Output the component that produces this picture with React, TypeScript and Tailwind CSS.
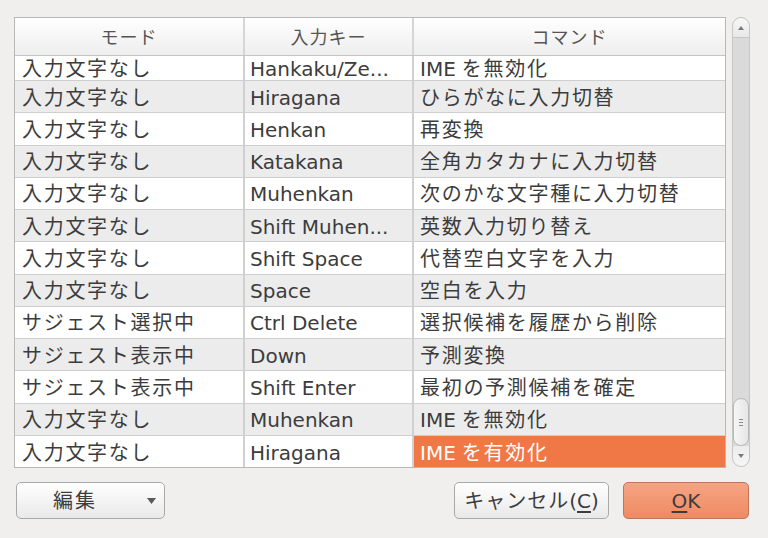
import React from "react";

const rows = [
  { mode: "入力文字なし", key: "Hankaku/Ze...", cmd: "IME を無効化" },
  { mode: "入力文字なし", key: "Hiragana", cmd: "ひらがなに入力切替" },
  { mode: "入力文字なし", key: "Henkan", cmd: "再変換" },
  { mode: "入力文字なし", key: "Katakana", cmd: "全角カタカナに入力切替" },
  { mode: "入力文字なし", key: "Muhenkan", cmd: "次のかな文字種に入力切替" },
  { mode: "入力文字なし", key: "Shift Muhen...", cmd: "英数入力切り替え" },
  { mode: "入力文字なし", key: "Shift Space", cmd: "代替空白文字を入力" },
  { mode: "入力文字なし", key: "Space", cmd: "空白を入力" },
  { mode: "サジェスト選択中", key: "Ctrl Delete", cmd: "選択候補を履歴から削除" },
  { mode: "サジェスト表示中", key: "Down", cmd: "予測変換" },
  { mode: "サジェスト表示中", key: "Shift Enter", cmd: "最初の予測候補を確定" },
  { mode: "入力文字なし", key: "Muhenkan", cmd: "IME を無効化" },
  { mode: "入力文字なし", key: "Hiragana", cmd: "IME を有効化" },
];

const font = { fontFamily: '"DejaVu Sans", "Noto Sans CJK JP", sans-serif' };

// splits leading latin ("IME ") from the japanese part so only the kana gets spacing
const Cmd = ({ text }: { text: string }) => {
  const m = text.match(/^([A-Za-z]+ )(.*)$/);
  if (!m) return <span className="tracking-[1.7px]">{text}</span>;
  return (
    <>
      <span>{m[1].trim()}</span>
      <span className="tracking-[1.7px] ml-[6px]">{m[2]}</span>
    </>
  );
};

const App = () => {
  return (
    <div
      className="w-[768px] h-[538px] bg-[#f0efee] text-[#3c3c3c] overflow-hidden"
      style={font}
    >
      <div className="flex pt-[17px] pl-[14px] gap-[6px]">
        {/* table */}
        <div className="w-[712px] h-[451px] border border-[#b8b8b8] bg-white flex flex-col overflow-hidden">
          <div className="grid grid-cols-[230px_169px_1fr] h-[38px] shrink-0 border-b border-[#c4c4c4] bg-gradient-to-b from-white to-[#eeeeee] text-[18px] text-[#555555] tracking-[1px]">
            <div className="flex items-center justify-center pt-[2px] border-r-2 border-[#d6d6d6]">モード</div>
            <div className="flex items-center justify-center pt-[2px] border-r-2 border-[#d6d6d6]">入力キー</div>
            <div className="flex items-center justify-center pt-[2px]">コマンド</div>
          </div>
          <div className="flex-1 overflow-hidden">
            {rows.map((r, i) => {
              const last = i === rows.length - 1;
              const bg = i % 2 === 1 ? "bg-[#ececec]" : "bg-white";
              const h = i === 0 ? "h-[25px]" : "h-[32.25px]";
              return (
                <div
                  key={i}
                  className={`grid grid-cols-[230px_169px_1fr] ${h} text-[20px] leading-[22px] ${bg} ${last ? "" : "border-b border-[#cfcfcf]"}`}
                >
                  <div className="flex items-center pl-[7px] pt-[2px] border-r-2 border-[#d0d0d0] whitespace-nowrap tracking-[1.7px]">
                    {r.mode}
                  </div>
                  <div className="flex items-center pl-[5px] pt-[2px] border-r-2 border-[#d0d0d0] whitespace-nowrap">
                    {r.key}
                  </div>
                  <div
                    className={`flex items-center pl-[6px] pt-[2px] whitespace-nowrap ${last ? "bg-[#f07746] text-white" : ""}`}
                  >
                    <Cmd text={r.cmd} />
                  </div>
                </div>
              );
            })}
          </div>
        </div>
        {/* scrollbar */}
        <div className="w-[18px] h-[450px] rounded-full border border-[#c6c6c6] bg-[#dadada] flex flex-col overflow-hidden">
          <div className="h-[20px] shrink-0 bg-gradient-to-b from-[#f8f8f8] to-[#e8e8e8] rounded-t-full border-b border-[#c6c6c6] flex items-center justify-center">
            <svg width="6" height="4" viewBox="0 0 6 4">
              <path d="M0 4 L3 0 L6 4 Z" fill="#7a7a7a" />
            </svg>
          </div>
          <div className="flex-1" />
          <div className="h-[48px] shrink-0 rounded-full border border-[#b8b8b8] bg-gradient-to-r from-[#f6f6f6] to-[#e6e6e6] flex flex-col items-center justify-center gap-[2px]">
            <div className="w-[4px] h-[1px] bg-[#8a8a8a]" />
            <div className="w-[4px] h-[1px] bg-[#8a8a8a]" />
            <div className="w-[4px] h-[1px] bg-[#8a8a8a]" />
          </div>
          <div className="h-[20px] shrink-0 bg-gradient-to-b from-[#ececec] to-[#f6f6f6] rounded-b-full flex items-center justify-center">
            <svg width="6" height="4" viewBox="0 0 6 4">
              <path d="M0 0 L3 4 L6 0 Z" fill="#7a7a7a" />
            </svg>
          </div>
        </div>
      </div>

      {/* buttons */}
      <div className="flex items-center mt-[14px] pl-[16px] pr-[19px]">
        <button className="w-[149px] h-[37px] rounded-[5px] border border-[#a9a9a9] bg-gradient-to-b from-white to-[#e9e9e9] flex items-center pl-[36px] pr-[8px] text-[20px] text-[#3c3c3c]">
          <span className="tracking-[2px]">編集</span>
          <span className="ml-auto">
            <svg width="9" height="6" viewBox="0 0 9 6">
              <path d="M0 0 L9 0 L4.5 6 Z" fill="#5a5a5a" />
            </svg>
          </span>
        </button>
        <div className="flex-1" />
        <button className="w-[155px] h-[37px] rounded-[5px] border border-[#a9a9a9] bg-gradient-to-b from-white to-[#e9e9e9] flex items-center justify-center text-[20px] text-[#3c3c3c]">
          <span className="tracking-[1px]">キャンセル</span>(<span className="underline underline-offset-[3px]">C</span>)
        </button>
        <button className="ml-[14px] w-[126px] h-[37px] rounded-[5px] border border-[#c27458] bg-gradient-to-b from-[#f6a484] to-[#ef8a62] flex items-center justify-center text-[20px] text-[#3c3c3c]">
          <span className="underline underline-offset-[3px]">O</span>K
        </button>
      </div>
    </div>
  );
};

export default App;
